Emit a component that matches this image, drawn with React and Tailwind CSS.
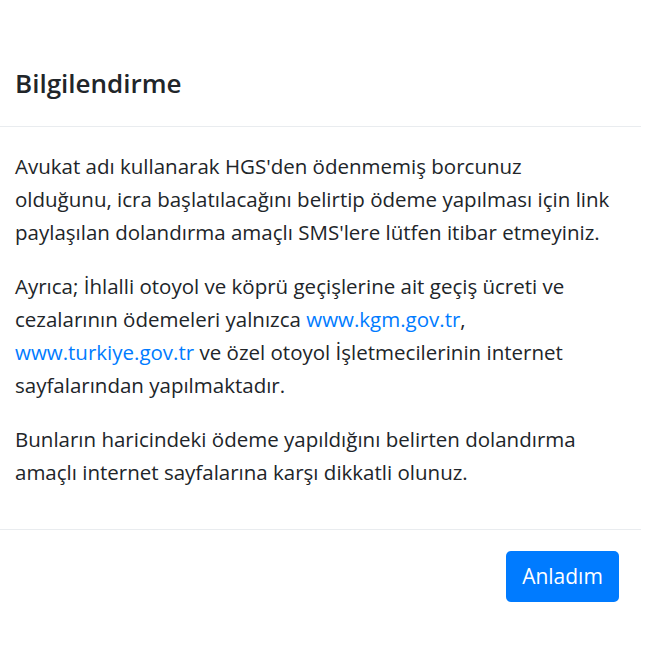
export default function App() {
  return (
    <div className="min-h-[660px] w-[650px] bg-white text-[#212529]" style={{ fontFamily: '"Open Sans", "Noto Sans", sans-serif' }}>
      <div className="w-[641px] pt-[41px]">
        <div className="border-b border-[#e9ecef] pb-[22px] pl-[15px] pr-[22px] pt-[22px]">
          <h5 className="text-[26px] font-semibold leading-[41px]">Bilgilendirme</h5>
        </div>

        <div className="pb-[19px] pl-[15px] pr-[22px] pt-[23px] text-[20.5px] leading-[33px]">
          <p className="mb-[21px]">
            Avukat adı kullanarak HGS'den ödenmemiş borcunuz<br />
            olduğunu, icra başlatılacağını belirtip ödeme yapılması için link<br />
            paylaşılan dolandırma amaçlı SMS'lere lütfen itibar etmeyiniz.
          </p>
          <p className="mb-[21px]">
            Ayrıca; İhlalli otoyol ve köprü geçişlerine ait geçiş ücreti ve<br />
            cezalarının ödemeleri yalnızca <a href="#" className="text-[#007bff]">www.kgm.gov.tr</a>,<br />
            <a href="#" className="text-[#007bff]">www.turkiye.gov.tr</a> ve özel otoyol İşletmecilerinin internet<br />
            sayfalarından yapılmaktadır.
          </p>
          <p className="mb-[21px]">
            Bunların haricindeki ödeme yapıldığını belirten dolandırma<br />
            amaçlı internet sayfalarına karşı dikkatli olunuz.
          </p>
        </div>

        <div className="flex justify-end border-t border-[#e9ecef] px-[22px] py-[21px]">
          <button className="h-[51px] w-[113px] rounded-[5px] bg-[#007bff] text-[21px] text-white">
            Anladım
          </button>
        </div>
      </div>
    </div>
  )
}
